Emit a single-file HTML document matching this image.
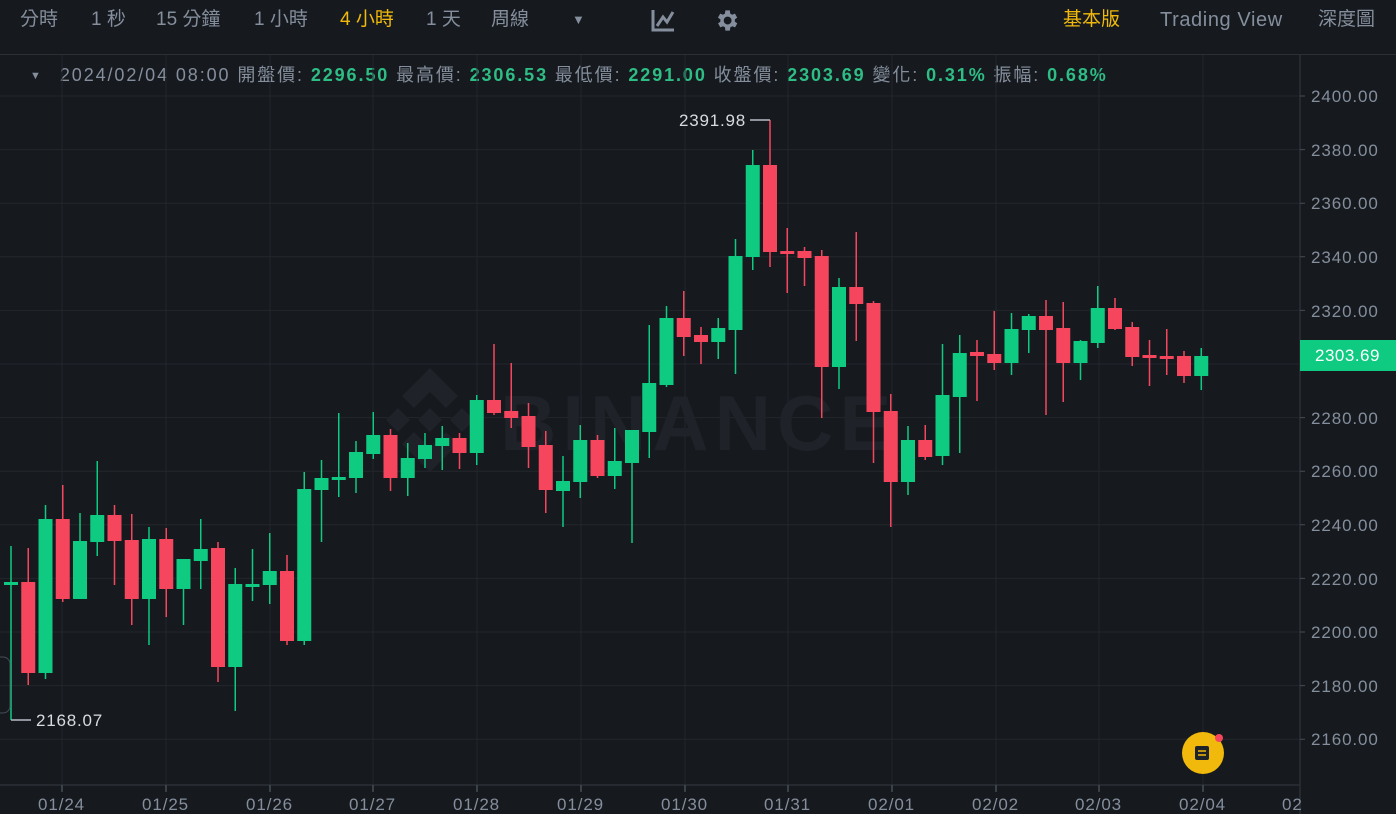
<!DOCTYPE html>
<html><head><meta charset="utf-8">
<style>
html,body{margin:0;padding:0;background:#161a1e;width:1396px;height:814px;overflow:hidden;font-family:"Liberation Sans","Noto Sans CJK TC",sans-serif}
.top{position:absolute;left:0;top:0;width:1396px;height:54px;border-bottom:1px solid #2b2f36;}
.t{position:absolute;top:0;line-height:40px;font-size:19px;color:#848e9c;white-space:nowrap}
.y{color:#f0b90b}
.info{position:absolute;top:62px;left:30px;line-height:26px;font-size:18px;letter-spacing:1.9px;color:#848e9c;white-space:nowrap}
.info b{color:#2ebd85;font-weight:bold}
</style></head><body>
<div class="top">
<span class="t" style="left:20px">分時</span>
<span class="t" style="left:91px">1 秒</span>
<span class="t" style="left:156px">15 分鐘</span>
<span class="t" style="left:254px">1 小時</span>
<span class="t y" style="left:340px">4 小時</span>
<span class="t" style="left:426px">1 天</span>
<span class="t" style="left:491px">周線</span>
<span class="t" style="left:572px;font-size:13px">▼</span>
<svg style="position:absolute;left:650px;top:8px" width="26" height="24" viewBox="0 0 26 24"><path d="M3 2V22H24" stroke="#848e9c" stroke-width="3" fill="none"/><path d="M7 18L13 9L17 14L23 4" stroke="#848e9c" stroke-width="3" fill="none"/></svg>
<svg style="position:absolute;left:713px;top:7px" width="27" height="27" viewBox="0 0 24 24"><path fill="#848e9c" d="M19.4 13a7.5 7.5 0 0 0 0-2l2.1-1.6-2-3.5-2.5 1a7.5 7.5 0 0 0-1.700-1L15 3h-4l-.4 2.9a7.5 7.5 0 0 0-1.7 1l-2.5-1-2 3.5L6.6 11a7.5 7.5 0 0 0 0 2l-2.1 1.6 2 3.5 2.5-1a7.5 7.5 0 0 0 1.7 1L11 21h4l.4-2.9a7.5 7.5 0 0 0 1.7-1l2.5 1 2-3.5zM13 15.5a3.5 3.5 0 1 1 0-7 3.5 3.5 0 0 1 0 7z"/></svg>
<span class="t y" style="left:1063px">基本版</span>
<span class="t" style="left:1160px;font-size:20px;letter-spacing:0.6px">Trading View</span>
<span class="t" style="left:1318px">深度圖</span>
</div>
<div class="info"><span style="font-size:11px;position:relative;top:-2px;letter-spacing:0">▼</span><span style="display:inline-block;width:19px"></span>2024/02/04 08:00 開盤價: <b>2296.50</b> 最高價: <b>2306.53</b> 最低價: <b>2291.00</b> 收盤價: <b>2303.69</b> 變化: <b>0.31%</b> 振幅: <b>0.68%</b></div>

<svg style="position:absolute;left:0;top:0" width="1396" height="814" viewBox="0 0 1396 814">
<g stroke="#23272d" stroke-width="1">
<path d="M0 96H1300M0 149.6H1300M0 203.2H1300M0 256.8H1300M0 310.4H1300M0 364H1300M0 417.6H1300M0 471.2H1300M0 524.8H1300M0 578.4H1300M0 632H1300M0 685.6H1300M0 739.2H1300"/>
<path d="M62 55V785M166 55V785M270 55V785M373 55V785M477 55V785M581 55V785M685 55V785M788 55V785M892 55V785M996 55V785M1099 55V785M1203 55V785"/>
</g>
<path d="M0 785H1300M1300 55V814" stroke="#2b2f36" stroke-width="1.5"/>
<g stroke="#474d57" stroke-width="1.5"><path d="M62 785V792M166 785V792M270 785V792M373 785V792M477 785V792M581 785V792M685 785V792M788 785V792M892 785V792M996 785V792M1099 785V792M1203 785V792"/></g>
<g fill="#1f2329">
<path d="M430 368l28 28-12 12-16-16-16 16-12-12z M398 408l12 12-12 12-12-12z M462 408l12 12-12 12-12-12z M430 408l12 12-12 12-12-12z M430 472l-28-28 12-12 16 16 16-16 12 12z"/>
<text x="500" y="450" font-size="78" font-weight="bold" font-family="Liberation Sans" letter-spacing="6">BINANCE</text>
</g>
<g font-size="17" fill="#848e9c" font-family="Liberation Sans" letter-spacing="0.9">
<text x="1311" y="102">2400.00</text><text x="1311" y="156">2380.00</text><text x="1311" y="209">2360.00</text><text x="1311" y="263">2340.00</text><text x="1311" y="317">2320.00</text><text x="1311" y="424">2280.00</text><text x="1311" y="477">2260.00</text><text x="1311" y="531">2240.00</text><text x="1311" y="585">2220.00</text><text x="1311" y="638">2200.00</text><text x="1311" y="692">2180.00</text><text x="1311" y="745">2160.00</text>
<text x="38" y="810">01/24</text><text x="142" y="810">01/25</text><text x="246" y="810">01/26</text><text x="349" y="810">01/27</text><text x="453" y="810">01/28</text><text x="557" y="810">01/29</text><text x="661" y="810">01/30</text><text x="764" y="810">01/31</text><text x="868" y="810">02/01</text><text x="972" y="810">02/02</text><text x="1075" y="810">02/03</text><text x="1179" y="810">02/04</text><text x="1282" y="810">02</text>
</g>
<g stroke="#474d57"><path d="M1300 96h5M1300 149.6h5M1300 203.2h5M1300 256.8h5M1300 310.4h5M1300 417.6h5M1300 471.2h5M1300 524.8h5M1300 578.4h5M1300 632h5M1300 685.6h5M1300 739.2h5"/></g>
<rect x="1300" y="340" width="96" height="31" fill="#0ecb81"/>
<text x="1315" y="361" font-size="17" fill="#fff" font-family="Liberation Sans" letter-spacing="0.5">2303.69</text>
<g stroke-width="1.5">
<g fill="#0ecb81" stroke="#0ecb81">
<line x1="11" y1="546" x2="11" y2="720"/><rect x="4" y="582" width="14" height="3" stroke="none"/>
<line x1="45.5" y1="505" x2="45.5" y2="679"/><rect x="38.5" y="519" width="14" height="154" stroke="none"/>
<line x1="80" y1="513" x2="80" y2="599"/><rect x="73" y="541" width="14" height="58" stroke="none"/>
<line x1="97.25" y1="461" x2="97.25" y2="556"/><rect x="90.25" y="515" width="14" height="27" stroke="none"/>
<line x1="149" y1="527" x2="149" y2="645"/><rect x="142" y="539" width="14" height="60" stroke="none"/>
<line x1="183.5" y1="559" x2="183.5" y2="625"/><rect x="176.5" y="559" width="14" height="30" stroke="none"/>
<line x1="200.75" y1="519" x2="200.75" y2="589"/><rect x="193.75" y="549" width="14" height="12" stroke="none"/>
<line x1="235.25" y1="568" x2="235.25" y2="711"/><rect x="228.25" y="584" width="14" height="83" stroke="none"/>
<line x1="252.5" y1="549" x2="252.5" y2="601"/><rect x="245.5" y="584" width="14" height="3" stroke="none"/>
<line x1="269.75" y1="533" x2="269.75" y2="604"/><rect x="262.75" y="571" width="14" height="14" stroke="none"/>
<line x1="304.25" y1="472" x2="304.25" y2="645"/><rect x="297.25" y="489" width="14" height="152" stroke="none"/>
<line x1="321.5" y1="460" x2="321.5" y2="542"/><rect x="314.5" y="478" width="14" height="12" stroke="none"/>
<line x1="338.75" y1="413" x2="338.75" y2="497"/><rect x="331.75" y="477" width="14" height="3" stroke="none"/>
<line x1="356" y1="441" x2="356" y2="493"/><rect x="349" y="452" width="14" height="26" stroke="none"/>
<line x1="373.25" y1="412" x2="373.25" y2="459"/><rect x="366.25" y="435" width="14" height="19" stroke="none"/>
<line x1="407.75" y1="443" x2="407.75" y2="496"/><rect x="400.75" y="458" width="14" height="20" stroke="none"/>
<line x1="425" y1="433" x2="425" y2="468"/><rect x="418" y="445" width="14" height="14" stroke="none"/>
<line x1="442.25" y1="426" x2="442.25" y2="470"/><rect x="435.25" y="438" width="14" height="8" stroke="none"/>
<line x1="476.75" y1="395" x2="476.75" y2="465"/><rect x="469.75" y="400" width="14" height="53" stroke="none"/>
<line x1="563" y1="456" x2="563" y2="527"/><rect x="556" y="481" width="14" height="10" stroke="none"/>
<line x1="580.25" y1="425" x2="580.25" y2="498"/><rect x="573.25" y="440" width="14" height="42" stroke="none"/>
<line x1="614.75" y1="428" x2="614.75" y2="489"/><rect x="607.75" y="461" width="14" height="15" stroke="none"/>
<line x1="632" y1="430" x2="632" y2="543"/><rect x="625" y="430" width="14" height="33" stroke="none"/>
<line x1="649.25" y1="325" x2="649.25" y2="458"/><rect x="642.25" y="383" width="14" height="49" stroke="none"/>
<line x1="666.5" y1="306" x2="666.5" y2="387"/><rect x="659.5" y="318" width="14" height="67" stroke="none"/>
<line x1="718.25" y1="318" x2="718.25" y2="359"/><rect x="711.25" y="328" width="14" height="14" stroke="none"/>
<line x1="735.5" y1="239" x2="735.5" y2="374"/><rect x="728.5" y="256" width="14" height="74" stroke="none"/>
<line x1="752.75" y1="150" x2="752.75" y2="270"/><rect x="745.75" y="165" width="14" height="92" stroke="none"/>
<line x1="839" y1="278" x2="839" y2="389"/><rect x="832" y="287" width="14" height="80" stroke="none"/>
<line x1="908" y1="426" x2="908" y2="495"/><rect x="901" y="440" width="14" height="42" stroke="none"/>
<line x1="942.5" y1="344" x2="942.5" y2="465"/><rect x="935.5" y="395" width="14" height="61" stroke="none"/>
<line x1="959.75" y1="335" x2="959.75" y2="453"/><rect x="952.75" y="353" width="14" height="44" stroke="none"/>
<line x1="1011.5" y1="313" x2="1011.5" y2="375"/><rect x="1004.5" y="329" width="14" height="34" stroke="none"/>
<line x1="1028.75" y1="314" x2="1028.75" y2="353"/><rect x="1021.75" y="316" width="14" height="14" stroke="none"/>
<line x1="1080.5" y1="340" x2="1080.5" y2="380"/><rect x="1073.5" y="341" width="14" height="22" stroke="none"/>
<line x1="1097.75" y1="286" x2="1097.75" y2="348"/><rect x="1090.75" y="308" width="14" height="35" stroke="none"/>
<line x1="1201.25" y1="348" x2="1201.25" y2="390"/><rect x="1194.25" y="356" width="14" height="20" stroke="none"/>
</g>
<g fill="#f6465d" stroke="#f6465d">
<line x1="28.25" y1="548" x2="28.25" y2="685"/><rect x="21.25" y="582" width="14" height="91" stroke="none"/>
<line x1="62.75" y1="485" x2="62.75" y2="602"/><rect x="55.75" y="519" width="14" height="80" stroke="none"/>
<line x1="114.5" y1="505" x2="114.5" y2="585"/><rect x="107.5" y="515" width="14" height="26" stroke="none"/>
<line x1="131.75" y1="514" x2="131.75" y2="625"/><rect x="124.75" y="540" width="14" height="59" stroke="none"/>
<line x1="166.25" y1="528" x2="166.25" y2="617"/><rect x="159.25" y="539" width="14" height="50" stroke="none"/>
<line x1="218" y1="542" x2="218" y2="682"/><rect x="211" y="548" width="14" height="119" stroke="none"/>
<line x1="287" y1="555" x2="287" y2="645"/><rect x="280" y="571" width="14" height="70" stroke="none"/>
<line x1="390.5" y1="429" x2="390.5" y2="491"/><rect x="383.5" y="435" width="14" height="43" stroke="none"/>
<line x1="459.5" y1="433" x2="459.5" y2="469"/><rect x="452.5" y="438" width="14" height="15" stroke="none"/>
<line x1="494" y1="344" x2="494" y2="415"/><rect x="487" y="400" width="14" height="13" stroke="none"/>
<line x1="511.25" y1="363" x2="511.25" y2="428"/><rect x="504.25" y="411" width="14" height="7" stroke="none"/>
<line x1="528.5" y1="403" x2="528.5" y2="468"/><rect x="521.5" y="416" width="14" height="31" stroke="none"/>
<line x1="545.75" y1="431" x2="545.75" y2="513"/><rect x="538.75" y="445" width="14" height="45" stroke="none"/>
<line x1="597.5" y1="435" x2="597.5" y2="478"/><rect x="590.5" y="440" width="14" height="36" stroke="none"/>
<line x1="683.75" y1="291" x2="683.75" y2="356"/><rect x="676.75" y="318" width="14" height="19" stroke="none"/>
<line x1="701" y1="327" x2="701" y2="364"/><rect x="694" y="335" width="14" height="7" stroke="none"/>
<line x1="770" y1="120" x2="770" y2="267"/><rect x="763" y="165" width="14" height="87" stroke="none"/>
<line x1="787.25" y1="228" x2="787.25" y2="293"/><rect x="780.25" y="251" width="14" height="3" stroke="none"/>
<line x1="804.5" y1="247" x2="804.5" y2="286"/><rect x="797.5" y="251" width="14" height="7" stroke="none"/>
<line x1="821.75" y1="250" x2="821.75" y2="418"/><rect x="814.75" y="256" width="14" height="111" stroke="none"/>
<line x1="856.25" y1="232" x2="856.25" y2="341"/><rect x="849.25" y="287" width="14" height="17" stroke="none"/>
<line x1="873.5" y1="301" x2="873.5" y2="463"/><rect x="866.5" y="303" width="14" height="109" stroke="none"/>
<line x1="890.75" y1="394" x2="890.75" y2="527"/><rect x="883.75" y="411" width="14" height="71" stroke="none"/>
<line x1="925.25" y1="425" x2="925.25" y2="460"/><rect x="918.25" y="440" width="14" height="17" stroke="none"/>
<line x1="977" y1="340" x2="977" y2="401"/><rect x="970" y="352" width="14" height="4" stroke="none"/>
<line x1="994.25" y1="311" x2="994.25" y2="370"/><rect x="987.25" y="354" width="14" height="9" stroke="none"/>
<line x1="1046" y1="300" x2="1046" y2="415"/><rect x="1039" y="316" width="14" height="14" stroke="none"/>
<line x1="1063.25" y1="302" x2="1063.25" y2="402"/><rect x="1056.25" y="328" width="14" height="35" stroke="none"/>
<line x1="1115" y1="298" x2="1115" y2="330"/><rect x="1108" y="308" width="14" height="21" stroke="none"/>
<line x1="1132.25" y1="322" x2="1132.25" y2="366"/><rect x="1125.25" y="327" width="14" height="30" stroke="none"/>
<line x1="1149.5" y1="340" x2="1149.5" y2="386"/><rect x="1142.5" y="355" width="14" height="3" stroke="none"/>
<line x1="1166.75" y1="329" x2="1166.75" y2="375"/><rect x="1159.75" y="356" width="14" height="3" stroke="none"/>
<line x1="1184" y1="351" x2="1184" y2="383"/><rect x="1177" y="356" width="14" height="20" stroke="none"/>
</g>
</g>
<path d="M750 120H770M11 720H31" stroke="#b7bdc6" stroke-width="1.5"/>
<text x="679" y="126" font-size="17" fill="#d8dce1" font-family="Liberation Sans" letter-spacing="0.8">2391.98</text>
<text x="36" y="726" font-size="17" fill="#d8dce1" font-family="Liberation Sans" letter-spacing="0.8">2168.07</text>
<path d="M0 657h3a7 7 0 0 1 7 7v42a7 7 0 0 1-7 7h-3" stroke="#474d57" fill="none"/>
<circle cx="1203" cy="753" r="21" fill="#f0b90b"/>
<rect x="1195" y="746" width="14" height="14" rx="2" fill="#1e2329"/>
<path d="M1198 751h8M1198 755h8" stroke="#f0b90b" stroke-width="1.5"/>
<circle cx="1219" cy="738" r="4" fill="#f6465d"/>
</svg>
</body></html>
